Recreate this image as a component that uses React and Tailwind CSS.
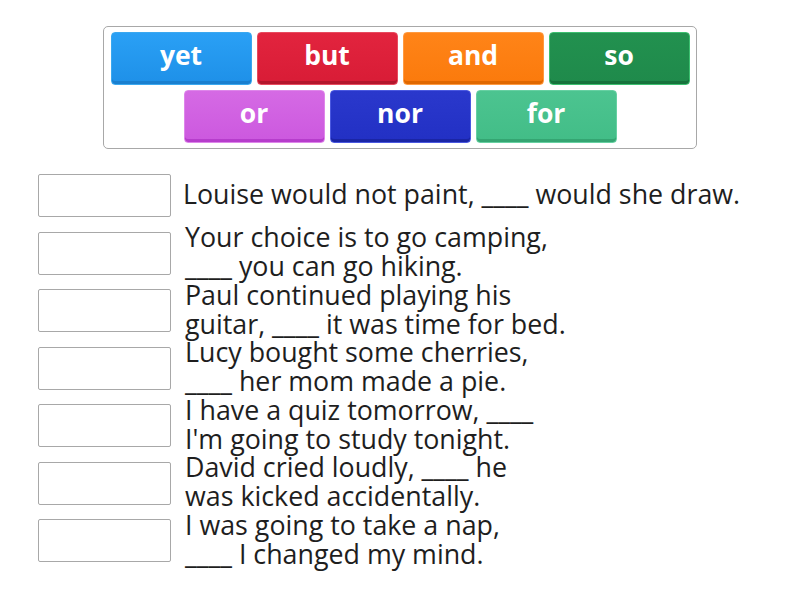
import React from "react";

const btns1 = [
  { t: "yet", c: "bg-[linear-gradient(#2aa0f5,#1e90e8)] border-[#3aa8f0] shadow-[inset_0_-3px_0_#1a7fcf]" },
  { t: "but", c: "bg-[linear-gradient(#e2243e,#d81c36)] border-[#e84a5e] shadow-[inset_0_-3px_0_#b3162c]" },
  { t: "and", c: "bg-[linear-gradient(#ff8418,#fb7a0c)] border-[#ff9a40] shadow-[inset_0_-3px_0_#e06800]" },
  { t: "so", c: "bg-[linear-gradient(#22914f,#1f8a4b)] border-[#3cc070] shadow-[inset_0_-3px_0_#17733c]" },
];
const btns2 = [
  { t: "or", c: "bg-[linear-gradient(#d56ae4,#cc58df)] border-[#de86ea] shadow-[inset_0_-3px_0_#b63dcc]" },
  { t: "nor", c: "bg-[linear-gradient(#2a38cc,#2230c4)] border-[#4a58e0] shadow-[inset_0_-3px_0_#1a25a5]" },
  { t: "for", c: "bg-[linear-gradient(#4cc490,#42bd87)] border-[#66d0a2] shadow-[inset_0_-3px_0_#34a572]" },
];

const items = [
  ["Louise would not paint, ____ would she draw."],
  ["Your choice is to go camping,", "____ you can go hiking."],
  ["Paul continued playing his", "guitar, ____ it was time for bed."],
  ["Lucy bought some cherries,", "____ her mom made a pie."],
  ["I have a quiz tomorrow, ____", "I'm going to study tonight."],
  ["David cried loudly, ____ he", "was kicked accidentally."],
  ["I was going to take a nap,", "____ I changed my mind."],
];

function Btn({ t, c }) {
  return (
    <div
      className={`w-[141px] h-[53px] rounded-[4px] border flex items-center justify-center text-white font-bold text-[26.5px] pb-[6px] ${c}`}
    >
      {t}
    </div>
  );
}

export default function App() {
  return (
    <div
      className="w-[800px] h-[600px] bg-white text-[#1e1e1e] overflow-hidden"
      style={{ fontFamily: '"Open Sans", "Noto Sans", sans-serif' }}
    >
      <div className="pt-[26px] flex justify-center">
        <div className="w-[594px] h-[123px] border border-[#a8a8a8] rounded-[5px] px-[6px] pt-[5px] flex flex-col items-center gap-[5px]">
          <div className="flex gap-[5px]">
            {btns1.map((b) => (
              <Btn key={b.t} {...b} />
            ))}
          </div>
          <div className="flex gap-[5px]">
            {btns2.map((b) => (
              <Btn key={b.t} {...b} />
            ))}
          </div>
        </div>
      </div>
      <div className="pt-[17.75px] pl-[38px] flex flex-col">
        {items.map((lines, i) => (
          <div key={i} className="h-[57.5px] flex items-center">
            <div className="w-[133px] h-[43px] border border-[#a8a8a8] rounded-[2px] shrink-0" />
            <div
              className={`${lines.length > 1 ? "ml-[14px]" : "ml-[12px]"} text-[26.8px] leading-[29px] whitespace-nowrap -mt-[4px]`}
            >
              {lines.map((l, j) => (
                <div key={j}>{l}</div>
              ))}
            </div>
          </div>
        ))}
      </div>
    </div>
  );
}
